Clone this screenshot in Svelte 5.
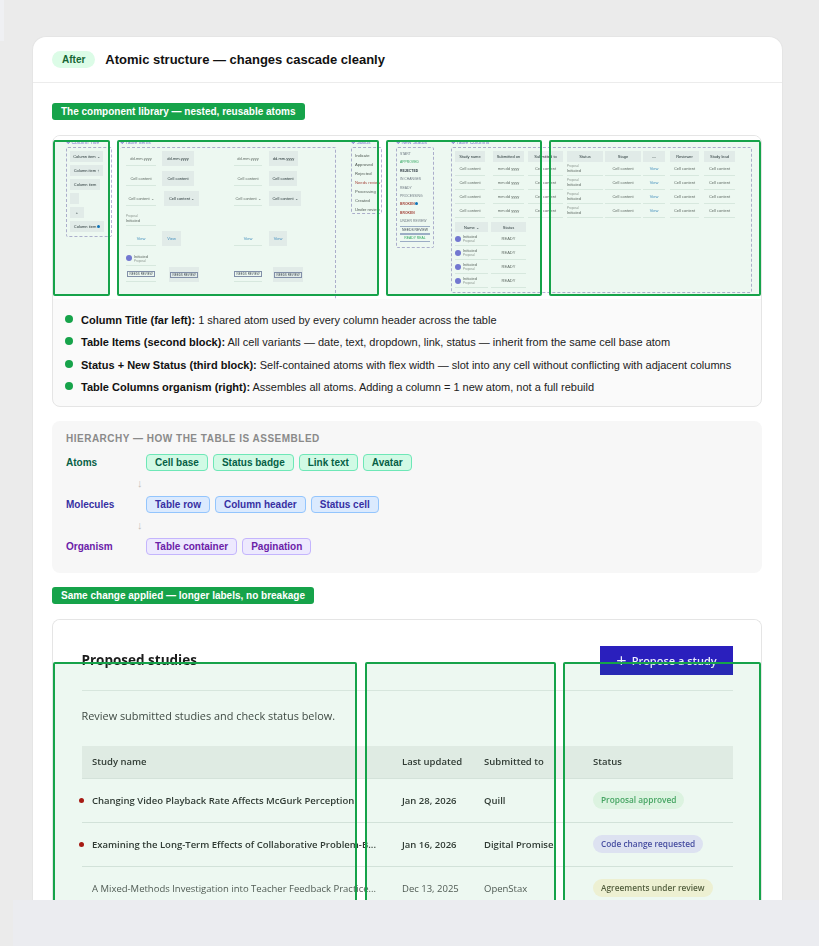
<script>
  const bullets = [
    ["Column Title (far left):", "1 shared atom used by every column header across the table"],
    ["Table Items (second block):", "All cell variants — date, text, dropdown, link, status — inherit from the same cell base atom"],
    ["Status + New Status (third block):", "Self-contained atoms with flex width — slot into any cell without conflicting with adjacent columns"],
    ["Table Columns organism (right):", "Assembles all atoms. Adding a column = 1 new atom, not a full rebuild"],
  ];
  const hierarchy = [
    { name: "Atoms", kind: "atom", chips: ["Cell base", "Status badge", "Link text", "Avatar"] },
    { name: "Molecules", kind: "mol", chips: ["Table row", "Column header", "Status cell"] },
    { name: "Organism", kind: "org", chips: ["Table container", "Pagination"] },
  ];
  const studies = [
    { name: "Changing Video Playback Rate Affects McGurk Perception", date: "Jan 28, 2026", to: "Quill", status: "Proposal approved", tone: "ok", dot: true },
    { name: "Examining the Long-Term Effects of Collaborative Problem-B...", date: "Jan 16, 2026", to: "Digital Promise", status: "Code change requested", tone: "code", dot: true },
    { name: "A Mixed-Methods Investigation into Teacher Feedback Practice...", date: "Dec 13, 2025", to: "OpenStax", status: "Agreements under review", tone: "agree", dot: false },
  ];
  const titleCells = [
    ["Column item ⌄", 33],
    ["Column item ↑", 33],
    ["Column item", 30],
    ["", 9],
    ["+", 14],
  ];
  // left head cell, right head cell: text plus width/offset
  const itemRows = [
    { a: "dd.mm.yyyy", b: "dd.mm.yyyy", w1: 32, w2: 29, off: 0 },
    { a: "Cell content", b: "Cell content", w1: 32, w2: 28, off: 0 },
    { a: "Cell content ⌄", b: "Cell content ⌄", w1: 35, w2: 32, off: 2 },
  ];
  const statusList = ["Indicate", "Approved", "Rejected", "Needs review", "Processing", "Created", "Under review"];
  const newStatus = ["START", "APPROVED", "REJECTED", "IN CHANGES", "READY", "PROCESSING", "BROKEN", "BROKEN", "UNDER REVIEW"];
  const colHeads = [
    ["Study name", 30, 8],
    ["Submitted on", 31, 4],
    ["Submitted to", 35, 4],
    ["Status", 36, 2],
    ["Stage", 36, 2],
    ["—", 22, 5],
    ["Reviewer", 29, 5],
    ["Study lead", 31, 0],
  ];
  const colCells = ["Cell content", "mm dd yyyy", "Cell content", null, "Cell content", "View", "Cell content", "Cell content"];
  const colRows = [0, 1, 2, 3];
</script>

<div class="strip"></div>
<main class="card">
  <header class="head">
    <span class="after">After</span>
    <h1>Atomic structure — changes cascade cleanly</h1>
  </header>
  <div class="body">
    <div class="tag">The component library — nested, reusable atoms</div>

    <section class="panel">
      <div class="shot lib">
        <div class="canvas">
          <div class="block title-block">
            <p class="cap">❖ Column Title</p>
            <div class="dash">
              {#each titleCells as c}<div class="th" style="width:{c[1]}px">{c[0]}</div>{/each}
              <div class="th" style="width:34px">Column item <i class="blue"></i></div>
            </div>
          </div>

          <div class="block items-block">
            <p class="cap">❖ Table Items</p>
            <div class="dash">
              {#each itemRows as r}
                <div class="irow">
                  <span class="td">{r.a}</span>
                  <span class="th" style="width:{r.w1}px;margin-left:{r.off}px">{r.a}</span>
                  <span class="td thin" style="margin-left:{72 - r.w1 - r.off}px">{r.b}</span>
                  <span class="th" style="width:{r.w2}px">{r.b}</span>
                </div>
              {/each}
              <div class="irow"><span class="td two"><small>Proposal</small>Initiated</span></div>
              <div class="irow">
                <span class="td link">View</span><span class="th link" style="width:19px">View</span>
                <span class="td link thin" style="margin-left:53px">View</span><span class="th link" style="width:18px">View</span>
              </div>
              <div class="irow"><span class="td person"><i class="ava"></i><span class="two">Initiated<small>Proposal</small></span></span></div>
              <div class="irow last">
                <span class="td"><b class="box">NEEDS REVIEW</b></span><span class="th" style="width:30px;margin-left:7px"><b class="box">NEEDS REVIEW</b></span>
                <span class="td thin" style="margin-left:35px"><b class="box">NEEDS REVIEW</b></span><span class="th" style="width:30px;margin-left:4px"><b class="box">NEEDS REVIEW</b></span>
              </div>
            </div>
          </div>

          <div class="block status-block">
            <p class="cap">❖ Status</p>
            <div class="dash">
              {#each statusList as s, i}<div class="st" class:red={i === 3}>{s}</div>{/each}
            </div>
          </div>

          <div class="block new-block">
            <p class="cap">❖ New Status</p>
            <div class="dash">
              {#each newStatus as s, i}
                <div class="ns" class:grn={i === 1} class:bad={i === 6 || i === 7} class:strong={i === 2}>{s}{#if i === 6} <i class="blue"></i>{/if}</div>
              {/each}
              <div class="ns box-row navy">NEEDS REVIEW</div>
              <div class="ns box-row grn">READY REAL</div>
            </div>
          </div>

          <div class="block cols-block">
            <p class="cap">❖ Table Columns</p>
            <div class="dash">
              <div class="crow top">
                {#each colHeads as h}<span class="th" style="width:{h[1]}px;margin-right:{h[2]}px">{h[0]}</span>{/each}
              </div>
              {#each colRows as r}
                <div class="crow">
                  {#each colHeads as h, i}
                    {#if colCells[i] === null}
                      <span class="td two" style="width:{h[1]}px;margin-right:{h[2]}px"><small>Proposal</small>Initiated</span>
                    {:else}
                      <span class="td" class:link={colCells[i] === "View"} style="width:{h[1]}px;margin-right:{h[2]}px">{colCells[i]}</span>
                    {/if}
                  {/each}
                </div>
              {/each}
              <div class="crow low">
                <span class="th" style="width:33px;margin-right:3px">Name ⌄</span><span class="th" style="width:35px">Status</span>
              </div>
              {#each colRows as r}
                <div class="crow">
                  <span class="td person" style="width:33px;margin-right:3px"><i class="ava"></i><span class="two">Initiated<small>Proposal</small></span></span>
                  <span class="td" style="width:35px">READY</span>
                </div>
              {/each}
            </div>
          </div>
        </div>
        <div class="mark m1"></div>
        <div class="mark m2"></div>
        <div class="mark m3"></div>
        <div class="mark m4"></div>
      </div>

      <ul class="notes">
        {#each bullets as b}
          <li><strong>{b[0]}</strong> {b[1]}</li>
        {/each}
      </ul>
    </section>

    <section class="hier">
      <h2>HIERARCHY — HOW THE TABLE IS ASSEMBLED</h2>
      {#each hierarchy as level, i}
        {#if i > 0}<div class="arrow">↓</div>{/if}
        <div class="level">
          <span class="lname {level.kind}">{level.name}</span>
          <div class="chips">
            {#each level.chips as c}<span class="chip {level.kind}">{c}</span>{/each}
          </div>
        </div>
      {/each}
    </section>

    <div class="tag">Same change applied — longer labels, no breakage</div>

    <section class="panel study-panel">
      <div class="shot studies">
        <div class="study">
          <div class="stitle">
            <h3>Proposed studies</h3>
            <span class="propose"><span class="plus">+</span> Propose a study</span>
          </div>
          <p class="desc">Review submitted studies and check status below.</p>
          <div class="srow shead">
            <span class="c1">Study name</span><span class="c2">Last updated</span><span class="c3">Submitted to</span><span class="c4">Status</span>
          </div>
          {#each studies as s}
            <div class="srow" class:plain={!s.dot}>
              <span class="c1">{#if s.dot}<i class="dot"></i>{/if}{s.name}</span>
              <span class="c2">{s.date}</span>
              <span class="c3">{s.to}</span>
              <span class="c4"><em class="pill {s.tone}">{s.status}</em></span>
            </div>
          {/each}
        </div>
        <div class="mark s1"></div>
        <div class="mark s2"></div>
        <div class="mark s3"></div>
      </div>
    </section>
  </div>
</main>
<div class="footer"></div>

<style>
  :global(body) {
    margin: 0;
    background: #ebebeb;
    font-family: "Liberation Sans", Arial, sans-serif;
    height: 946px;
    overflow: hidden;
  }
  .strip {
    position: absolute;
    left: 0;
    top: 0;
    width: 4px;
    height: 41px;
    background: #eff0f3;
  }
  .footer {
    position: absolute;
    left: 13px;
    right: 0;
    top: 900px;
    height: 46px;
    background: #ebecf0;
  }
  .card {
    box-sizing: border-box;
    width: 751px;
    margin: 36px 0 0 32px;
    height: 910px;
    background: #fff;
    border: 1px solid #e5e5e5;
    border-bottom: 0;
    border-radius: 14px 14px 0 0;
    overflow: hidden;
  }
  .head {
    display: flex;
    align-items: center;
    gap: 10px;
    height: 45px;
    padding: 0 19px;
    border-bottom: 1px solid #ececec;
  }
  .after {
    background: #dcfce7;
    color: #166534;
    font-size: 10px;
    font-weight: 700;
    padding: 2px 10px;
    line-height: 13px;
    border-radius: 20px;
  }
  h1 {
    margin: 0;
    font-size: 13px;
    font-weight: 700;
    color: #111;
  }
  .body {
    padding: 20px 19px 0;
  }
  .tag {
    width: fit-content;
    background: #16a34a;
    color: #fff;
    font-size: 10px;
    font-weight: 700;
    line-height: 17px;
    padding: 0 9px;
    border-radius: 3px;
  }
  .panel {
    width: 710px;
    box-sizing: border-box;
    border: 1px solid #e5e5e5;
    border-radius: 8px;
    margin-top: 15px;
    overflow: hidden;
    background: #fafafa;
  }
  .shot {
    position: relative;
    background: #fff;
    overflow: hidden;
  }
  .lib {
    height: 163px;
  }
  .mark {
    position: absolute;
    box-sizing: border-box;
    border: 2px solid #16a34a;
    border-radius: 2px;
    background: rgba(22, 163, 74, 0.08);
  }
  .m1 { left: 0; top: 4px; width: 57px; height: 156px; }
  .m2 { left: 64px; top: 4px; width: 262px; height: 156px; }
  .m3 { left: 333px; top: 4px; width: 156px; height: 156px; }
  .m4 { left: 496px; top: 4px; width: 212px; height: 156px; }

  .canvas {
    display: flex;
    align-items: flex-start;
    height: 163px;
    padding: 3px 0 0 13px;
    filter: blur(0.7px);
    font-size: 4px;
    color: #666;
    line-height: 5px;
  }
  .block { flex: none; }
  .cap {
    margin: 0 0 2px;
    color: #8a78dc;
    font-size: 5px;
    line-height: 6px;
  }
  .dash {
    border: 1px dashed #b8afd6;
    border-radius: 2px;
    box-sizing: border-box;
  }
  .th {
    flex: none;
    display: flex;
    align-items: center;
    justify-content: center;
    background: #f2f1f6;
    color: #2c3038;
    gap: 1px;
    white-space: nowrap;
    overflow: hidden;
  }
  .td {
    display: flex;
    align-items: center;
    justify-content: center;
    white-space: nowrap;
    border-bottom: 1px solid #e8eeeb;
    overflow: hidden;
  }
  .td.two, .two { display: flex; flex-direction: column; align-items: flex-start; justify-content: center; }
  small { font-size: 3px; line-height: 4px; color: #999; }
  .link { color: #4a90c8; }
  .blue { display: inline-block; width: 3px; height: 3px; border-radius: 50%; background: #0b6fc2; }
  .ava { flex: none; display: block; width: 6px; height: 6px; border-radius: 50%; background: #7a73dc; margin-right: 2px; }
  .box { border: 1px solid #8a8eb0; padding: 0 1px; font-size: 3px; line-height: 4px; font-weight: 400; color: #445; }

  .title-block { width: 46px; margin-right: 8px; }
  .title-block .dash { width: 46px; height: 90px; padding: 3px; display: flex; flex-direction: column; gap: 3.5px; align-items: flex-start; }
  .title-block .th { height: 10.5px; }

  .items-block { width: 216px; margin-right: 15px; }
  .items-block .dash {
    height: 160px;
    padding: 3px 0 0 6px;
    border-bottom: 0;
    border-left: 0;
    display: flex;
    flex-direction: column;
    gap: 5px;
  }
  .irow { display: flex; align-items: stretch; height: 15px; }
  .irow .td { flex: none; width: 30px; margin-right: 6px; }
  .irow .thin { width: 28px; margin-right: 7px; }
  .irow .person { justify-content: flex-start; }
  .irow.last { margin-top: -4px; }

  .status-block { width: 31px; margin-right: 14px; }
  .status-block .dash { height: 67px; padding: 3px; }
  .st { height: 9px; line-height: 9px; white-space: nowrap; font-size: 4.2px; color: #555; }
  .red { color: #b3423f; }

  .new-block { width: 38px; margin-right: 17px; }
  .new-block .dash { height: 101px; padding: 2px 3px; }
  .ns { height: 8.4px; line-height: 8.4px; font-size: 3.4px; white-space: nowrap; color: #778; }
  .grn { color: #33a862; }
  .bad { color: #b3423f; font-weight: 700; }
  .strong { color: #334; font-weight: 700; }
  .box-row { box-sizing: border-box; border-top: 1px solid #a8aed0; border-bottom: 1px solid #a8aed0; text-align: center; line-height: 6.4px; }
  .navy { color: #445; }

  .cols-block { width: 301px; }
  .cols-block .dash { height: 146px; padding: 3px; display: flex; flex-direction: column; }
  .crow { display: flex; height: 14px; align-items: stretch; flex: none; }
  .crow.top { height: 11px; }
  .crow .td { flex: none; }
  .crow .person { justify-content: flex-start; }
  .crow.low { height: 10px; margin-top: 4px; }

  .notes {
    list-style: none;
    margin: 0;
    padding: 14px 12px 12px;
    font-size: 11px;
    line-height: 14px;
    color: #222;
  }
  .notes li {
    position: relative;
    padding-left: 16px;
    margin-bottom: 8.3px;
    white-space: nowrap;
  }
  .notes li:last-child { margin-bottom: 0; }
  .notes li::before {
    content: "";
    position: absolute;
    left: 0;
    top: 2px;
    width: 8px;
    height: 8px;
    border-radius: 50%;
    background: #16a34a;
  }
  .notes strong { color: #111; }

  .hier {
    width: 710px;
    box-sizing: border-box;
    margin: 14px 0;
    height: 152px;
    background: #f7f7f7;
    border-radius: 8px;
    padding: 11px 14px;
  }
  h2 {
    margin: 0 0 9px;
    font-size: 10px;
    line-height: 13px;
    font-weight: 700;
    letter-spacing: 0.5px;
    color: #8a8a8a;
  }
  .level { display: flex; align-items: center; height: 17px; }
  .lname { width: 80px; font-size: 10px; font-weight: 700; }
  .lname.atom { color: #065f46; }
  .lname.mol { color: #3730a3; }
  .lname.org { color: #6b21a8; }
  .chips { display: flex; gap: 5px; }
  .chip {
    font-size: 10px;
    font-weight: 700;
    line-height: 15px;
    padding: 0 8px;
    border: 1px solid;
    border-radius: 4px;
  }
  .chip.atom { background: #d1fae5; border-color: #6ee7b7; color: #065f46; }
  .chip.mol { background: #dbeafe; border-color: #93c5fd; color: #3730a3; }
  .chip.org { background: #ede9fe; border-color: #c4b5fd; color: #6b21a8; }
  .arrow {
    height: 25px;
    line-height: 25px;
    padding-left: 71px;
    font-size: 11px;
    color: #c4c0ba;
  }

  .study-panel { background: #fff; height: 320px; border-bottom: 0; }
  .studies { height: 320px; }
  .study {
    padding: 26px 28px 0 28.5px;
    filter: blur(0.5px);
    font-family: "Open Sans", sans-serif;
    color: #222;
  }
  .stitle {
    display: flex;
    justify-content: space-between;
    align-items: center;
    height: 44px;
    margin-bottom: 16px;
    border-bottom: 1px solid #e8ecea;
  }
  h3 { margin: 0 0 15px; font-size: 13.5px; font-weight: 700; color: #1b1b1b; }
  .propose {
    box-sizing: border-box;
    width: 133px;
    height: 29px;
    margin-bottom: 15px;
    background: #2a1fbd;
    color: #eef;
    font-size: 11px;
    font-weight: 600;
    display: flex;
    align-items: center;
    justify-content: center;
    gap: 5px;
  }
  .plus { font-size: 18px; font-weight: 400; line-height: 15px; }
  .desc { margin: 0 0 21px; font-size: 10.9px; line-height: 18px; color: #444; }
  .srow {
    display: flex;
    align-items: center;
    height: 43px;
    font-size: 9.5px;
    font-weight: 600;
    color: #333;
    border-bottom: 1px solid #e2e8e5;
    white-space: nowrap;
  }
  .srow.plain { font-weight: 400; color: #555; border-bottom: 0; }
  .shead { height: 32px; background: #f0f1f0; border-bottom: 1px solid #e4e8e6; }
  .c1 { width: 320.5px; padding-left: 10.5px; box-sizing: border-box; position: relative; }
  .c2 { width: 82px; }
  .c3 { width: 109px; }
  .c4 { flex: 1; }
  .dot {
    position: absolute;
    left: -3px;
    top: 4px;
    width: 5px;
    height: 5px;
    border-radius: 50%;
    background: #b30f0f;
  }
  .pill {
    display: inline-block;
    font-style: normal;
    font-size: 8.3px;
    font-weight: 600;
    line-height: 18px;
    padding: 0 8px;
    border-radius: 9px;
  }
  .pill.ok { background: #edfaed; color: #4aa565; }
  .pill.code { background: #eee8ff; color: #4a46a8; }
  .pill.agree { background: #fff7de; color: #5a5a3e; }

  .s1 { left: 0; top: 42px; width: 304px; height: 290px; }
  .s2 { left: 312px; top: 42px; width: 191px; height: 290px; }
  .s3 { left: 510px; top: 42px; width: 198px; height: 290px; }
</style>
